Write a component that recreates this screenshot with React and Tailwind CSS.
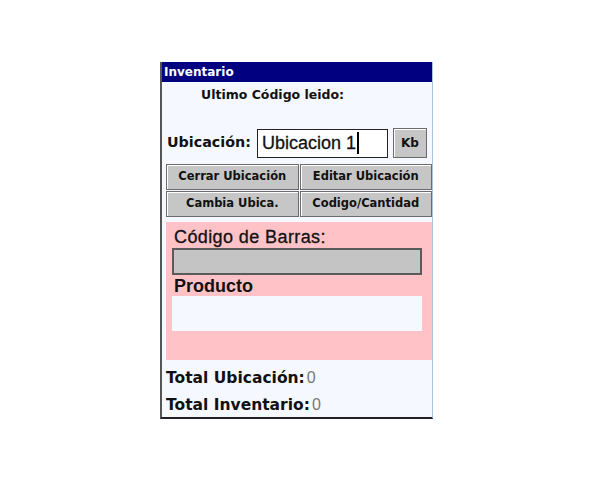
export default function App() {
  const btn =
    "h-[26px] bg-[#c6c6c6] border border-[#6b6b6b] shadow-[inset_1px_1px_0_#ffffff] text-[11.5px] font-bold text-[#111] flex items-center justify-center font-['DejaVu_Sans',Verdana,sans-serif]";

  return (
    <div className="w-[600px] h-[480px] bg-white font-['Liberation_Sans',Arial,sans-serif]">
      <div className="ml-[160px] pt-[62px]">
        <div className="w-[273px] h-[357px] bg-[#f5f9ff] border-l-2 border-l-[#555] border-b-2 border-b-[#222] border-r border-r-[#a9c4e6] flex flex-col">
          <div className="h-[20px] bg-[#000080] text-white text-[12px] font-bold pl-[2px] flex items-center font-['DejaVu_Sans',Verdana,sans-serif]">
            Inventario
          </div>

          <div className="pl-[39px] mt-[6px] text-[12.5px] font-bold text-[#111] leading-[14px] font-['DejaVu_Sans',Verdana,sans-serif]">
            Ultimo Código leido:
          </div>

          <div className="flex items-center mt-[26px] ml-[5px]">
            <span className="w-[86px] text-[14.3px] font-bold text-[#111] font-['DejaVu_Sans',Verdana,sans-serif]">Ubicación:</span>
            <div className="ml-[4px] w-[131px] h-[29px] bg-white border border-[#222] flex items-center pl-[4px] text-[18px] text-[#111] [-webkit-text-stroke:0.3px_#111]">
              Ubicacion 1<span className="w-[2px] h-[22px] bg-black ml-[1px]" />
            </div>
            <div className="ml-[5px] w-[34px] h-[30px] bg-[#c6c6c6] border border-[#6b6b6b] shadow-[inset_1px_1px_0_#ffffff] flex items-center justify-center text-[12px] font-bold text-[#111] font-['DejaVu_Sans',Verdana,sans-serif]">
              Kb
            </div>
          </div>

          <div className="mt-[6px] ml-[4px] grid grid-cols-2 gap-[1px]">
            <div className={btn}>Cerrar Ubicación</div>
            <div className={btn}>Editar Ubicación</div>
            <div className={btn}>Cambia Ubica.</div>
            <div className={btn}>Codigo/Cantidad</div>
          </div>

          <div className="mt-[5px] ml-[4px] h-[138px] bg-[#ffc2c6] pl-[6px] pr-[10px] pt-[5px]">
            <div className="text-[18px] tracking-[0.4px] text-[#111] leading-[20px] pl-[2px] [-webkit-text-stroke:0.3px_#111]">Código de Barras:</div>
            <div className="mt-[1px] h-[27px] bg-[#c4c4c4] border-2 border-[#5a5a5a]" />
            <div className="text-[18px] font-bold text-[#111] leading-[20px] mt-[1px] pl-[2px]">Producto</div>
            <div className="h-[35px] bg-[#f5f9ff]" />
          </div>

          <div className="mt-[6px] ml-[4px] flex items-baseline leading-[24px] font-['DejaVu_Sans',Verdana,sans-serif]">
            <span className="text-[15.5px] font-bold text-[#111]">Total Ubicación:</span>
            <span className="ml-[2px] text-[16px] text-[#777] font-['Liberation_Sans',Arial,sans-serif]">0</span>
          </div>
          <div className="mt-[3px] ml-[4px] flex items-baseline leading-[24px] font-['DejaVu_Sans',Verdana,sans-serif]">
            <span className="text-[15.5px] font-bold text-[#111]">Total Inventario:</span>
            <span className="ml-[2px] text-[16px] text-[#777] font-['Liberation_Sans',Arial,sans-serif]">0</span>
          </div>
        </div>
      </div>
    </div>
  );
}
